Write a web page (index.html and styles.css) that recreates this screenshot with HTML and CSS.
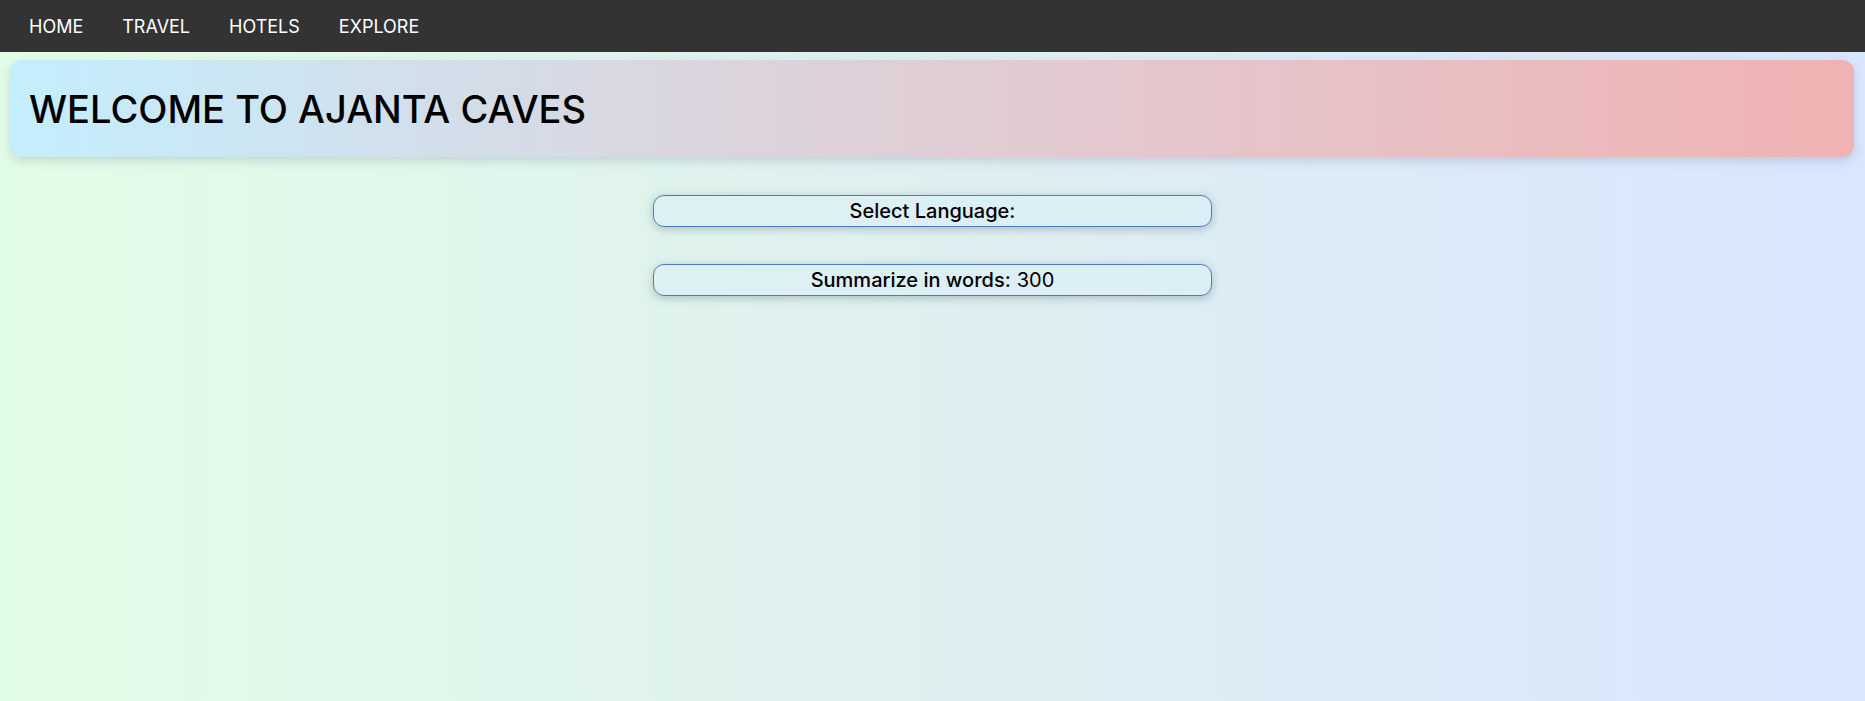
FILE: index.html
```html
<!DOCTYPE html>
<html>
<head>
<meta charset="utf-8">
<link rel="stylesheet" href="styles.css">
</head>
<body>
<nav class="topnav">
  <a class="nav-link" href="#">HOME</a>
  <a class="nav-link" href="#">TRAVEL</a>
  <a class="nav-link" href="#">HOTELS</a>
  <a class="nav-link" href="#">EXPLORE</a>
</nav>
<header class="hero">
  <h1 class="hero-title">WELCOME TO AJANTA CAVES</h1>
</header>
<main class="controls">
  <div class="pill"><span class="pill-label">Select Language:</span></div>
  <div class="pill"><span class="pill-label">Summarize in words:</span> <span class="pill-value">300</span></div>
</main>
</body>
</html>
```
FILE: styles.css
```css
html, body {
  margin: 0;
  padding: 0;
  height: 100%;
}
body {
  font-family: "Inter", "Open Sans", sans-serif;
  background: linear-gradient(to right, #e2fde6 0%, #deeff0 50%, #d8e6fe 100%);
  min-height: 701px;
}
.topnav {
  height: 52px;
  background: #333333;
  display: flex;
  align-items: center;
  padding-left: 29px;
  gap: 39px;
}
.nav-link {
  color: #ffffff;
  text-decoration: none;
  font-size: 18px;
}
.hero {
  margin: 8px 11px 0 10px;
  height: 97px;
  border-radius: 12px;
  background: linear-gradient(to right, #c4eefd 0%, #dcd3dc 40%, #f0b2b2 100%);
  box-shadow: 0 4px 10px rgba(100, 120, 150, 0.25);
  display: flex;
  align-items: center;
  padding-left: 19px;
}
.hero-title {
  margin: 0;
  font-size: 38px;
  font-weight: 500;
  color: #000;
}
.controls {
  display: flex;
  flex-direction: column;
  align-items: center;
  gap: 37px;
  padding-top: 38px;
}
.pill {
  width: 30%;
  height: 32px;
  box-sizing: border-box;
  border: 1px solid #4a7fbf;
  border-radius: 11px;
  background: rgba(220, 240, 245, 0.7);
  box-shadow: 0 2px 8px rgba(80, 90, 100, 0.35);
  display: flex;
  align-items: center;
  justify-content: center;
  font-size: 20px;
  color: #000;
}
.pill-label {
  font-weight: 500;
}
.pill-value {
  font-weight: 400;
  margin-left: 6px;
}
```
